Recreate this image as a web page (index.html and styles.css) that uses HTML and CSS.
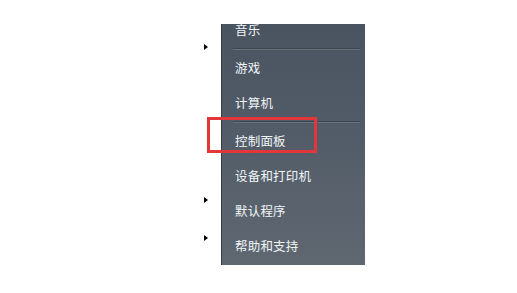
FILE: index.html
```html
<!DOCTYPE html>
<html lang="zh-CN">
<head>
<meta charset="utf-8">
<title>开始菜单</title>
<link rel="stylesheet" href="styles.css">
</head>
<body>
<div class="stage">
  <div class="left-list">
    <div class="row"><span class="arrow"></span></div>
    <div class="row"></div>
    <div class="row"></div>
    <div class="row"></div>
    <div class="row"><span class="arrow"></span></div>
    <div class="row"><span class="arrow"></span></div>
  </div>
  <div class="panel">
    <div class="item first">音乐</div>
    <div class="sep"></div>
    <div class="item">游戏</div>
    <div class="item">计算机</div>
    <div class="sep"></div>
    <div class="item">控制面板<span class="highlight"></span></div>
    <div class="item">设备和打印机</div>
    <div class="item">默认程序</div>
    <div class="item">帮助和支持</div>
  </div>
</div>
</body>
</html>
```
FILE: styles.css
```css
html, body {
  margin: 0;
  padding: 0;
  background: #ffffff;
  width: 517px;
  height: 293px;
  overflow: hidden;
}

.stage {
  display: flex;
  align-items: flex-start;
  padding-top: 24px;
  padding-left: 200px;
  font-family: "Noto Sans CJK SC", "Microsoft YaHei", sans-serif;
}

.left-list {
  width: 21px;
  margin-top: 4px;
  display: flex;
  flex-direction: column;
}

.row {
  height: 38.25px;
  display: flex;
  align-items: center;
  padding-left: 4px;
}

.arrow {
  width: 0;
  height: 0;
  border-top: 3.5px solid transparent;
  border-bottom: 3.5px solid transparent;
  border-left: 4px solid #000000;
}

.panel {
  position: relative;
  width: 143px;
  height: 241px;
  border-left: 1px solid #353c45;
  background: linear-gradient(180deg, #4a5461 0%, #525c68 45%, #5f6871 100%);
  display: flex;
  flex-direction: column;
}

.item {
  position: relative;
  height: 35px;
  flex: none;
  display: flex;
  align-items: center;
  padding-left: 13px;
  font-size: 12.5px;
  color: #f2f5f8;
  letter-spacing: 0.2px;
}

.item.first {
  margin-top: -12px;
}

.sep {
  flex: none;
  height: 3px;
  display: flex;
  flex-direction: column;
  justify-content: center;
  padding: 0 5px 0 11px;
}

.sep::before {
  content: "";
  display: block;
  height: 1px;
  background: #3d4550;
}

.sep::after {
  content: "";
  display: block;
  height: 1px;
  background: #6a727c;
}

.highlight {
  position: absolute;
  left: -15px;
  top: -6px;
  width: 104px;
  height: 30px;
  border: 3px solid #e3363b;
  pointer-events: none;
}
```
